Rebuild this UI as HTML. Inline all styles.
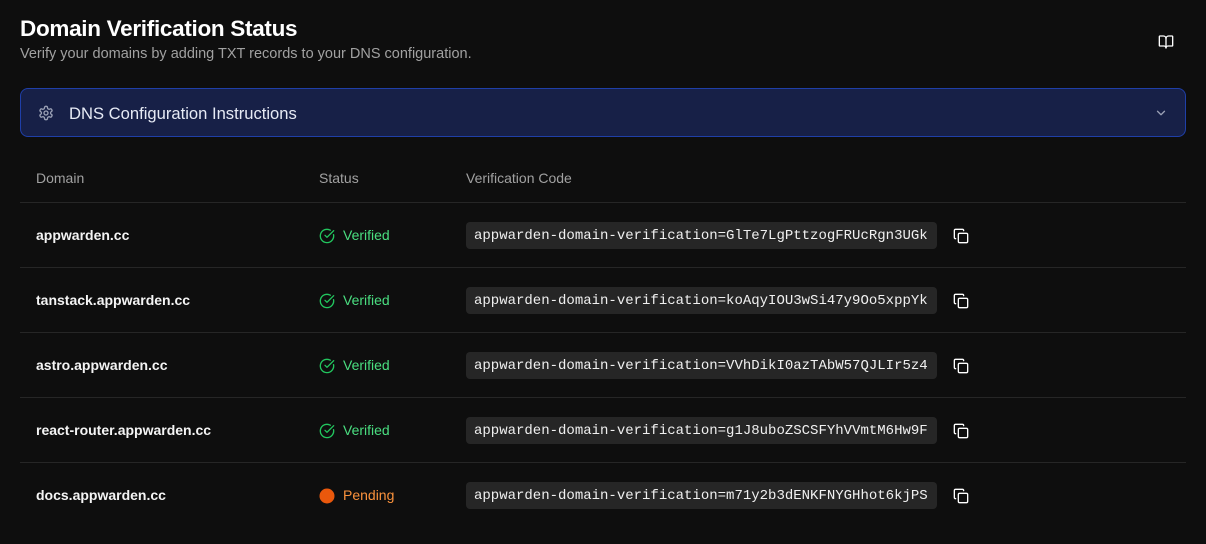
<!DOCTYPE html>
<html><head><style>
body{margin:0;background:#0e0e0e;width:1206px;height:544px;overflow:hidden;font-family:"Liberation Sans",sans-serif;color:#fff}
h1{position:absolute;left:20px;top:16px;margin:0;font-size:22.5px;font-weight:700;letter-spacing:-0.3px}
.sub{position:absolute;left:20px;top:46px;font-size:14.5px;color:#a1a1a1}
.book{position:absolute;left:1158px;top:34px}
.acc{position:absolute;left:20px;top:88px;width:1166px;height:49px;box-sizing:border-box;background:#172047;border:1px solid #1f3fa8;border-radius:8px}
.acc span{position:absolute;left:48px;top:15px;font-size:16.6px;font-weight:500;color:#e6eaf5}
.acc svg.g{position:absolute;left:17px;top:16px}
.acc svg.c{position:absolute;left:1133px;top:17px}
.hdr{position:absolute;top:170px;font-size:14px;color:#a1a1a1}
.row{position:absolute;left:20px;width:1166px;height:65px;border-top:1px solid #262626}
.row .d{position:absolute;left:16px;top:24px;font-size:14px;font-weight:700;color:#f4f4f4}
.row .s{position:absolute;left:299px;top:24px;font-size:14px;color:#4ade80}
.row .s svg{position:absolute;left:0;top:1px}
.row .s b{font-weight:400;position:absolute;left:24px;top:0;white-space:nowrap}
.row .code{position:absolute;left:446px;top:19px;width:471px;height:27px;background:#262626;border-radius:4px;font-family:"Liberation Mono",monospace;font-size:14px;line-height:28px;padding-left:8px;box-sizing:border-box;color:#f0f0f0;white-space:nowrap}
.row .cp{position:absolute;left:933px;top:25px}
</style></head><body>
<h1>Domain Verification Status</h1>
<div class="sub">Verify your domains by adding TXT records to your DNS configuration.</div>
<svg class="book" width="16" height="16" viewBox="0 0 24 24" fill="none" stroke="#fff" stroke-width="2" stroke-linecap="round" stroke-linejoin="round"><path d="M12 7v14"/><path d="M3 18a1 1 0 0 1-1-1V4a1 1 0 0 1 1-1h5a4 4 0 0 1 4 4 4 4 0 0 1 4-4h5a1 1 0 0 1 1 1v13a1 1 0 0 1-1 1h-6a3 3 0 0 0-3 3 3 3 0 0 0-3-3z"/></svg>
<div class="acc">
<svg class="g" width="16" height="16" viewBox="0 0 24 24" fill="none" stroke="#9aa0b5" stroke-width="2" stroke-linecap="round" stroke-linejoin="round"><path d="M12.22 2h-.44a2 2 0 0 0-2 2v.18a2 2 0 0 1-1 1.730l-.43.25a2 2 0 0 1-2 0l-.15-.08a2 2 0 0 0-2.73.73l-.22.38a2 2 0 0 0 .73 2.73l.15.1a2 2 0 0 1 1 1.72v.51a2 2 0 0 1-1 1.74l-.15.09a2 2 0 0 0-.73 2.73l.22.38a2 2 0 0 0 2.73.73l.15-.08a2 2 0 0 1 2 0l.43.25a2 2 0 0 1 1 1.73V20a2 2 0 0 0 2 2h.44a2 2 0 0 0 2-2v-.18a2 2 0 0 1 1-1.73l.43-.25a2 2 0 0 1 2 0l.15.08a2 2 0 0 0 2.73-.73l.22-.39a2 2 0 0 0-.73-2.730l-.15-.08a2 2 0 0 1-1-1.74v-.5a2 2 0 0 1 1-1.74l.15-.09a2 2 0 0 0 .73-2.73l-.22-.38a2 2 0 0 0-2.73-.73l-.15.08a2 2 0 0 1-2 0l-.43-.25a2 2 0 0 1-1-1.73V4a2 2 0 0 0-2-2z"/><circle cx="12" cy="12" r="3"/></svg>
<span>DNS Configuration Instructions</span>
<svg class="c" width="14" height="14" viewBox="0 0 24 24" fill="none" stroke="#9aa0b5" stroke-width="2.2" stroke-linecap="round" stroke-linejoin="round"><path d="m6 9 6 6 6-6"/></svg>
</div>
<div class="hdr" style="left:36px">Domain</div>
<div class="hdr" style="left:319px">Status</div>
<div class="hdr" style="left:466px">Verification Code</div>

<div class="row" style="top:202px"><div class="d">appwarden.cc</div><div class="s"><svg width="16" height="16" viewBox="0 0 24 24" fill="none" stroke="#22c55e" stroke-width="2" stroke-linecap="round" stroke-linejoin="round"><path d="M21.8 10A10 10 0 1 1 17 3.3"/><path d="m9 11 3 3L22 4"/></svg><b>Verified</b></div><div class="code">appwarden-domain-verification=GlTe7LgPttzogFRUcRgn3UGk</div><svg class="cp" width="16" height="16" viewBox="0 0 24 24" fill="none" stroke="#fff" stroke-width="2" stroke-linecap="round" stroke-linejoin="round"><rect x="8" y="8" width="14" height="14" rx="2"/><path d="M4 16c-1.1 0-2-.9-2-2V4c0-1.1.9-2 2-2h10c1.1 0 2 .9 2 2"/></svg></div>

<div class="row" style="top:267px"><div class="d">tanstack.appwarden.cc</div><div class="s"><svg width="16" height="16" viewBox="0 0 24 24" fill="none" stroke="#22c55e" stroke-width="2" stroke-linecap="round" stroke-linejoin="round"><path d="M21.8 10A10 10 0 1 1 17 3.3"/><path d="m9 11 3 3L22 4"/></svg><b>Verified</b></div><div class="code">appwarden-domain-verification=koAqyIOU3wSi47y9Oo5xppYk</div><svg class="cp" width="16" height="16" viewBox="0 0 24 24" fill="none" stroke="#fff" stroke-width="2" stroke-linecap="round" stroke-linejoin="round"><rect x="8" y="8" width="14" height="14" rx="2"/><path d="M4 16c-1.1 0-2-.9-2-2V4c0-1.1.9-2 2-2h10c1.1 0 2 .9 2 2"/></svg></div>

<div class="row" style="top:332px"><div class="d">astro.appwarden.cc</div><div class="s"><svg width="16" height="16" viewBox="0 0 24 24" fill="none" stroke="#22c55e" stroke-width="2" stroke-linecap="round" stroke-linejoin="round"><path d="M21.8 10A10 10 0 1 1 17 3.3"/><path d="m9 11 3 3L22 4"/></svg><b>Verified</b></div><div class="code">appwarden-domain-verification=VVhDikI0azTAbW57QJLIr5z4</div><svg class="cp" width="16" height="16" viewBox="0 0 24 24" fill="none" stroke="#fff" stroke-width="2" stroke-linecap="round" stroke-linejoin="round"><rect x="8" y="8" width="14" height="14" rx="2"/><path d="M4 16c-1.1 0-2-.9-2-2V4c0-1.1.9-2 2-2h10c1.1 0 2 .9 2 2"/></svg></div>

<div class="row" style="top:397px"><div class="d">react-router.appwarden.cc</div><div class="s"><svg width="16" height="16" viewBox="0 0 24 24" fill="none" stroke="#22c55e" stroke-width="2" stroke-linecap="round" stroke-linejoin="round"><path d="M21.8 10A10 10 0 1 1 17 3.3"/><path d="m9 11 3 3L22 4"/></svg><b>Verified</b></div><div class="code">appwarden-domain-verification=g1J8uboZSCSFYhVVmtM6Hw9F</div><svg class="cp" width="16" height="16" viewBox="0 0 24 24" fill="none" stroke="#fff" stroke-width="2" stroke-linecap="round" stroke-linejoin="round"><rect x="8" y="8" width="14" height="14" rx="2"/><path d="M4 16c-1.1 0-2-.9-2-2V4c0-1.1.9-2 2-2h10c1.1 0 2 .9 2 2"/></svg></div>

<div class="row" style="top:462px"><div class="d">docs.appwarden.cc</div><div class="s" style="color:#fb923c"><svg width="16" height="16" viewBox="0 0 16 16"><circle cx="8" cy="8" r="7.5" fill="#ea580c"/></svg><b>Pending</b></div><div class="code">appwarden-domain-verification=m71y2b3dENKFNYGHhot6kjPS</div><svg class="cp" width="16" height="16" viewBox="0 0 24 24" fill="none" stroke="#fff" stroke-width="2" stroke-linecap="round" stroke-linejoin="round"><rect x="8" y="8" width="14" height="14" rx="2"/><path d="M4 16c-1.1 0-2-.9-2-2V4c0-1.1.9-2 2-2h10c1.1 0 2 .9 2 2"/></svg></div>
</body></html>
